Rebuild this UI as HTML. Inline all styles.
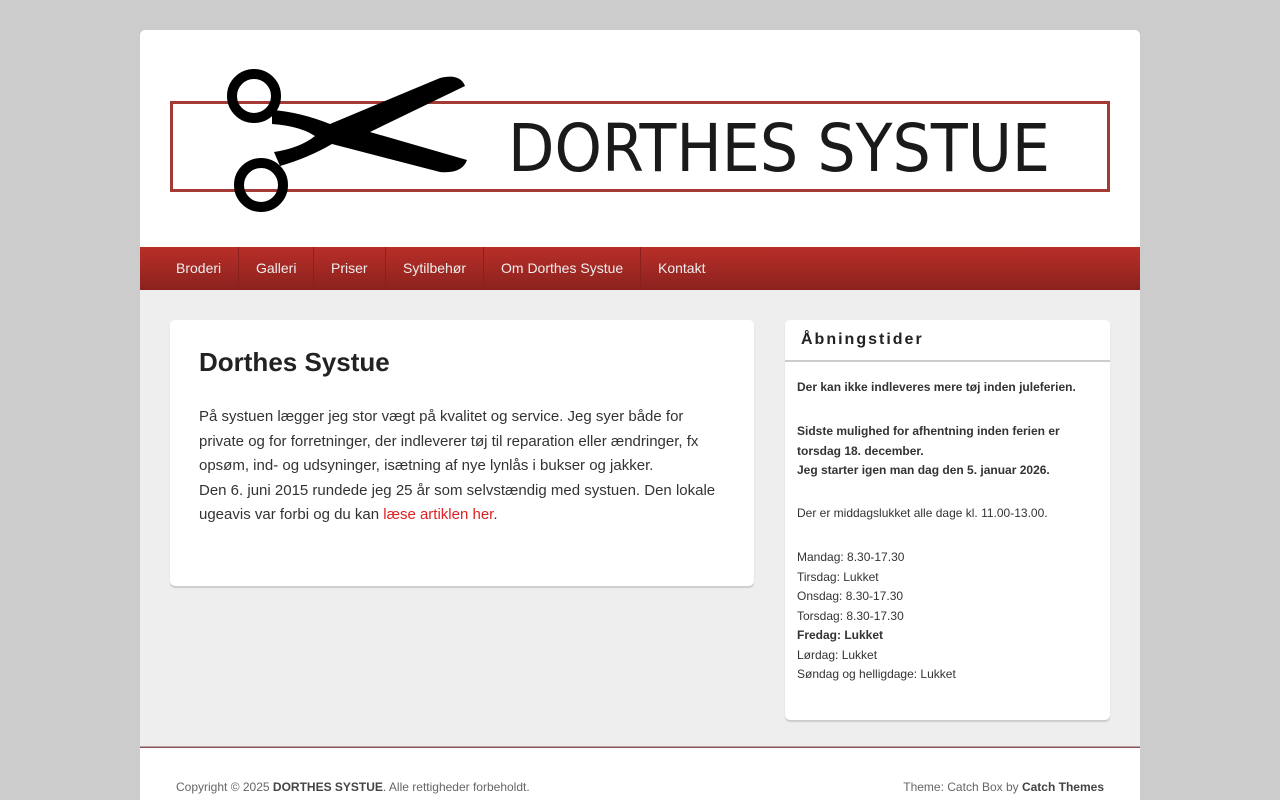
<!DOCTYPE html>
<html><head><meta charset="utf-8"><style>
*{margin:0;padding:0;box-sizing:border-box}
html,body{width:1280px;height:800px;overflow:hidden}
body{background:#ccc;font-family:"Liberation Sans",sans-serif;position:relative}
#page{position:absolute;left:140px;top:30px;width:1000px;height:770px;background:#fff;border-radius:5px 5px 0 0}
#main{position:absolute;left:140px;top:290px;width:1000px;height:457px;background:#eee}
.abs{position:absolute}
nav{position:absolute;left:140px;top:247px;width:1000px;height:43px;background:linear-gradient(#b92e28,#8b221e)}
nav a{position:absolute;top:0;height:43px;line-height:42px;color:#eee;font-size:14px;text-decoration:none}
nav .sep{position:absolute;top:0;width:1px;height:43px;background:#8a201c}
.box{position:absolute;background:#fff;border-radius:5px;box-shadow:0 2px 1px #ccc}
.w p{font-size:12px;color:#333;line-height:19.5px}
</style></head><body>
<div id="page"></div>
<svg class="abs" style="left:160px;top:60px" width="960" height="160">
<rect x="11.5" y="42.5" width="937" height="88" fill="none" stroke="#a33a35" stroke-width="3"/>
<circle cx="94" cy="36" r="22" fill="none" stroke="#000" stroke-width="10"/>
<circle cx="101" cy="125" r="22" fill="none" stroke="#000" stroke-width="10"/>
<path d="M112 50 Q140 52 170 64 L280 18 Q300 13 305 26 L210 72 L307 100 Q302 114 280 112 L172 84 Q148 98 120 106 L114 92 Q140 88 155 76 Q140 66 112 64 Z" fill="#000"/>
<text x="348" y="111" font-family="DejaVu Sans,Liberation Sans,sans-serif" font-size="66" fill="#1a1a1a" textLength="542" lengthAdjust="spacingAndGlyphs">DORTHES SYSTUE</text>
</svg>
<nav>
<a style="left:36px">Broderi</a><div class="sep" style="left:98px"></div>
<a style="left:116px">Galleri</a><div class="sep" style="left:173px"></div>
<a style="left:191px">Priser</a><div class="sep" style="left:245px"></div>
<a style="left:263px">Sytilbehør</a><div class="sep" style="left:343px"></div>
<a style="left:361px">Om Dorthes Systue</a><div class="sep" style="left:500px"></div>
<a style="left:518px">Kontakt</a>
</nav>
<div id="main"></div>
<div class="box" style="left:170px;top:320px;width:584px;height:266px">
<div class="abs" style="left:29px;top:27px;font-size:26px;font-weight:bold;color:#222">Dorthes Systue</div>
<div class="abs" style="left:29px;top:85px;width:530px;font-size:15px;line-height:24.5px;color:#333">På systuen lægger jeg stor vægt på kvalitet og service. Jeg syer både for private og for forretninger, der indleverer tøj til reparation eller ændringer, fx opsøm, ind- og udsyninger, isætning af nye lynlås i bukser og jakker.<br>Den 6. juni 2015 rundede jeg 25 år som selvstændig med systuen. Den lokale ugeavis var forbi og du kan <span style="color:#d22">læse artiklen her</span>.</div>
</div>
<div class="box w" style="left:785px;top:320px;width:325px;height:400px">
<div class="abs" style="left:16px;top:11px;font-size:16px;font-weight:bold;letter-spacing:2px;color:#222">Åbningstider</div>
<div class="abs" style="left:0;top:40px;width:325px;height:2px;background:#ccc"></div>
<div class="abs" style="left:12px;top:58px;width:300px">
<p><b>Der kan ikke indleveres mere tøj inden juleferien.</b></p><p>&nbsp;</p>
<p style="margin-top:5px"><b>Sidste mulighed for afhentning inden ferien er torsdag 18. december.<br>Jeg starter igen man dag den 5. januar 2026.</b></p><p>&nbsp;</p>
<p style="margin-top:4px">Der er middagslukket alle dage kl. 11.00-13.00.</p><p>&nbsp;</p>
<p style="margin-top:5px">Mandag: 8.30-17.30<br>Tirsdag: Lukket<br>Onsdag: 8.30-17.30<br>Torsdag: 8.30-17.30<br><b>Fredag: Lukket</b><br>Lørdag: Lukket<br>Søndag og helligdage: Lukket</p>
</div>
</div>
<div class="abs" style="left:140px;top:746px;width:1000px;height:2px;background:linear-gradient(#ccc,#7a2a26)"></div>
<div class="abs" style="left:176px;top:780px;font-size:12px;color:#666">Copyright © 2025 <b style="color:#444">DORTHES SYSTUE</b>. Alle rettigheder forbeholdt.</div>
<div class="abs" style="right:176px;top:780px;font-size:12px;color:#666">Theme: Catch Box by <b style="color:#444">Catch Themes</b></div>
</body></html>
